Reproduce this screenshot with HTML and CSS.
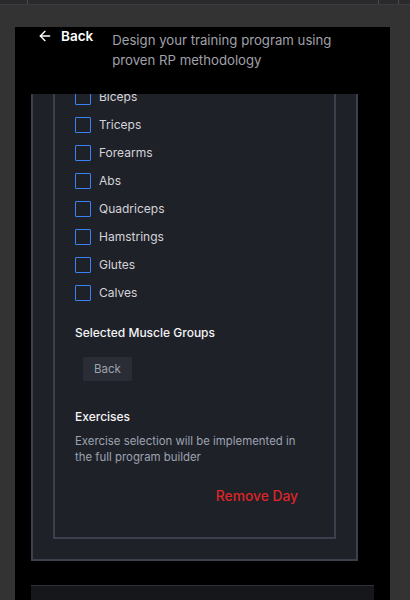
FILE: index.html
```html
<!DOCTYPE html>
<html lang="en">
<head>
<meta charset="utf-8">
<title>Create Program</title>
<link rel="stylesheet" href="styles.css">
</head>
<body>
  <div class="topstrip">
    <span class="seg seg-a"></span>
    <span class="seg seg-b"></span>
    <span class="seg seg-c"></span>
    <span class="seg seg-d"></span>
  </div>
  <main class="panel">
    <header class="header">
      <button class="back-link" type="button">
        <svg class="back-icon" viewBox="0 0 24 24" width="16" height="16" fill="none" stroke="currentColor" stroke-width="2" stroke-linecap="round" stroke-linejoin="round"><path d="m12 19-7-7 7-7"/><path d="M19 12H5"/></svg>
        <span>Back</span>
      </button>
      <p class="header-desc">Design your training program using proven RP methodology</p>
    </header>
    <div class="scroll">
      <div class="scroll-content">
        <section class="outer-card">
          <div class="day-card">
            <ul class="muscles">
              <li class="muscle"><span class="box"></span><span>Biceps</span></li>
              <li class="muscle"><span class="box"></span><span>Triceps</span></li>
              <li class="muscle"><span class="box"></span><span>Forearms</span></li>
              <li class="muscle"><span class="box"></span><span>Abs</span></li>
              <li class="muscle"><span class="box"></span><span>Quadriceps</span></li>
              <li class="muscle"><span class="box"></span><span>Hamstrings</span></li>
              <li class="muscle"><span class="box"></span><span>Glutes</span></li>
              <li class="muscle"><span class="box"></span><span>Calves</span></li>
            </ul>
            <h3 class="section-title">Selected Muscle Groups</h3>
            <button class="chip" type="button">Back</button>
            <h3 class="section-title exercises-title">Exercises</h3>
            <p class="section-desc">Exercise selection will be implemented in the full program builder</p>
            <button class="remove" type="button">Remove Day</button>
          </div>
        </section>
        <div class="bottom-bar"></div>
      </div>
    </div>
  </main>
</body>
</html>
```
FILE: styles.css
```css
* { box-sizing: border-box; }

html, body {
  margin: 0;
  padding: 0;
  height: 600px;
  overflow: hidden;
}

body {
  background: #333334;
  font-family: Inter, "Noto Sans", "Liberation Sans", sans-serif;
  color: #e5e7eb;
}

.topstrip {
  display: flex;
  height: 5px;
  background: #2a2a2c;
  border-bottom: 1px solid #3c3c3e;
}
.seg { display: block; height: 100%; border-right: 1px solid #4a4a4c; }
.seg-a { width: 28px; }
.seg-b { width: 351px; }
.seg-c { width: 20px; }
.seg-d { flex: 1; border-right: none; }

.panel {
  margin: 22px 0 0 15px;
  width: 375px;
  height: 573px;
  background: #000;
  display: flex;
  flex-direction: column;
}

.header {
  height: 67px;
  flex: none;
  display: flex;
  align-items: flex-start;
  padding: 0 16px 0 22px;
  gap: 19px;
}

.back-link {
  display: flex;
  align-items: center;
  gap: 8px;
  background: none;
  border: none;
  padding: 0;
  color: #fff;
  font: 600 13.5px/18px Inter, "Liberation Sans", sans-serif;
}
.back-icon { display: block; flex: none; }

.header-desc {
  margin: 3px 0 0;
  flex: 1;
  font-size: 13.2px;
  line-height: 20px;
  color: #a1a1aa;
}

.scroll {
  flex: 1;
  overflow: hidden;
}
.scroll-content {
  margin-top: -7px;
}

.outer-card {
  width: 327px;
  margin-left: 16px;
  background: #1f2129;
  border: 2px solid #3b404c;
  border-top: none;
  padding: 0 20px 20px;
}

.day-card {
  background: #1f2129;
  border: 2px solid #3b404c;
  border-top: none;
  padding: 0 20px 23px;
  display: flex;
  flex-direction: column;
  align-items: flex-start;
}

.muscles {
  list-style: none;
  margin: 0;
  padding: 0;
  display: flex;
  flex-direction: column;
  gap: 8px;
}
.muscle {
  display: flex;
  align-items: center;
  gap: 8px;
  height: 20px;
  font-size: 12px;
  line-height: 20px;
  color: #d4d4d8;
}
.box {
  width: 16px;
  height: 16px;
  border: 1.5px solid #3b82f6;
  border-radius: 1px;
  flex: none;
}

.section-title {
  margin: 20px 0 0;
  font-size: 12px;
  line-height: 20px;
  font-weight: 500;
  color: #f4f4f5;
}

.chip {
  margin: 14px 0 0 8px;
  padding: 4px 11px;
  border: none;
  border-radius: 2px;
  background: #2a2d35;
  color: #9ca3af;
  font: 400 11.5px/16px Inter, "Liberation Sans", sans-serif;
}

.exercises-title { margin-top: 26px; }

.section-desc {
  margin: 6px 0 0;
  font-size: 11.4px;
  line-height: 16px;
  color: #9ca3af;
}

.remove {
  align-self: flex-end;
  margin-top: 13px;
  padding: 8px 16px;
  border: none;
  background: none;
  color: #dc2626;
  font: 500 13.8px/20px Inter, "Liberation Sans", sans-serif;
}

.bottom-bar {
  margin: 24px 16px 0;
  height: 40px;
  background: #16171b;
  border-top: 1px solid #2e3036;
}
```
